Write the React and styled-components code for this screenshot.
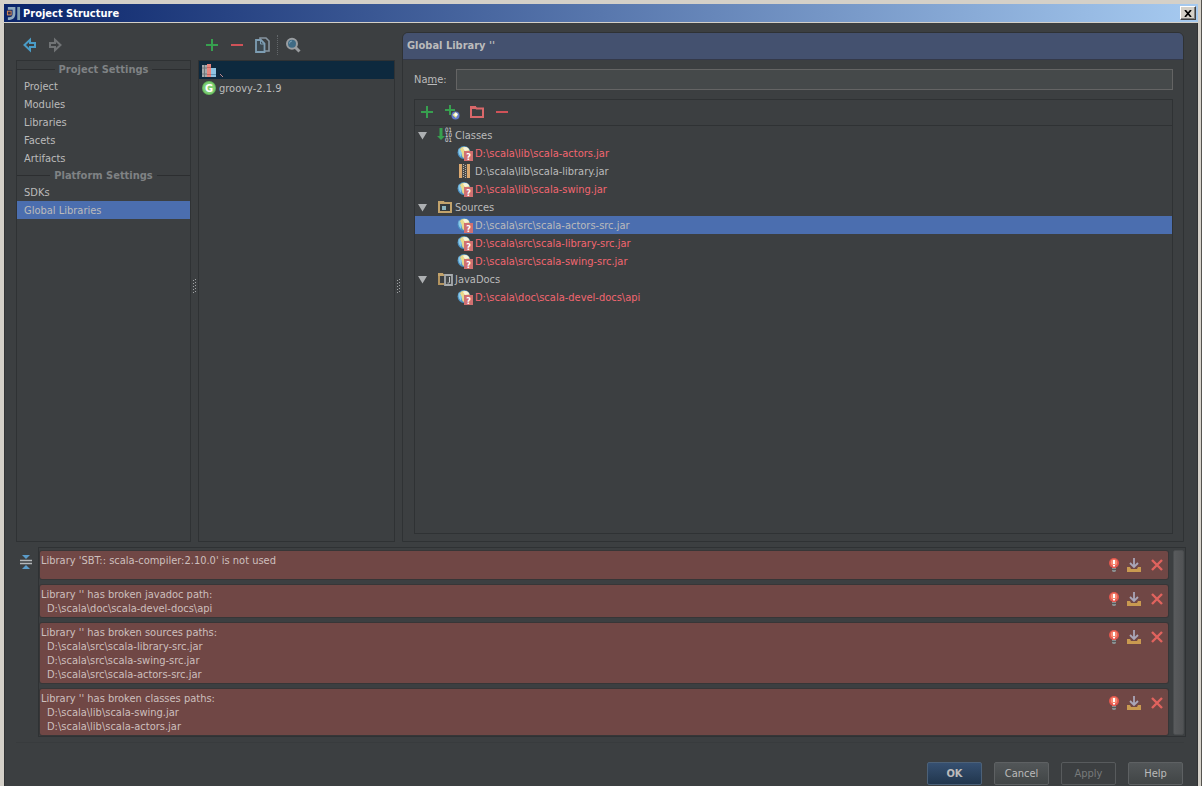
import React, { useState } from "react";
import styled, { createGlobalStyle, css } from "styled-components";

const GlobalStyle = createGlobalStyle`
    * {
        box-sizing: border-box;
    }

    body {
        margin: 0;
        border-right: 1px solid #55534f;
        background: #3c3f41;
    }

    body, button, input {
        font-family: "DejaVu Sans Condensed", "DejaVu Sans", sans-serif;
        font-size: 11px;
        color: #bbbbbb;
    }

    ul {
        list-style: none;
        margin: 0;
        padding: 0;
    }

    svg {
        display: block;
        flex: none;
    }
`;

/* ---------- window ---------- */

const Window = styled.div`
    min-height: 100vh;
    display: flex;
    flex-direction: column;
    border-style: solid;
    border-color: #d4d0c8;
    border-width: 4px 3px 0 4px;
    background: #3c3f41;
    box-shadow: inset 1px 0 #313335, inset -1px 0 #313335;
`;

const TitleBar = styled.header`
    display: flex;
    align-items: center;
    gap: 2px;
    height: 19px;
    padding: 0 2px;
    border-bottom: 1px solid #d4d0c8;
    background: linear-gradient(to right, #0a246a, #a6caf0);
`;

const WindowTitle = styled.h1`
    flex: 1;
    margin: 0;
    padding-top: 1px;
    font-size: 11px;
    line-height: 18px;
    color: #fff;
`;

const CloseButton = styled.button`
    display: flex;
    align-items: center;
    justify-content: center;
    width: 16px;
    height: 14px;
    padding: 0;
    border: 1px solid;
    border-color: #fff #404040 #404040 #fff;
    background: #d4d0c8;
    box-shadow: inset -1px -1px #808080;
`;

const Content = styled.div`
    flex: 1;
    display: flex;
    flex-direction: column;
    padding: 9px 14px 1px 12px;
`;

const Main = styled.main`
    flex: 1;
    display: grid;
    grid-template-columns: 175px 7px 197px 7px minmax(0, 1fr);
`;

const Column = styled.div`
    display: flex;
    flex-direction: column;
`;

/* ---------- toolbars ---------- */

const Toolbar = styled.div`
    display: flex;
    align-items: center;
    gap: 9px;
    height: ${(p) => p.$height || 28}px;
    padding: 0 6px 2px;

    ${(p) =>
        p.$framed &&
        css`
            padding: 0 4px 1px;
            border-bottom: 1px solid #2f3234;
        `}
`;

const IconButton = styled.button`
    display: flex;
    align-items: center;
    justify-content: center;
    width: 16px;
    height: 16px;
    padding: 0;
    border: 0;
    background: none;
    cursor: pointer;
`;

const Separator = styled.span`
    height: 20px;
    margin: 0 -2px;
    border-left: 1px dotted #63676a;
`;

/* ---------- left lists ---------- */

const Panel = styled.div`
    flex: 1;
    border: 1px solid #2f3234;
`;

const GroupTitle = styled.h2`
    display: flex;
    align-items: center;
    gap: 4px;
    height: 16px;
    margin: 0;
    padding-top: 1px;
    font-size: 11px;
    line-height: 16px;
    color: #7f8284;

    &::before,
    &::after {
        content: "";
        flex: 1;
        border-top: 1px solid #2c2e30;
    }
`;

const NavLink = styled.a`
    display: block;
    height: 18px;
    padding: 1px 7px 0;
    line-height: 18px;
    color: #bbbbbb;
    text-decoration: none;
    background: ${(p) => (p.$active ? "#4b6eaf" : "none")};
`;

const LibraryLink = styled.a`
    display: flex;
    align-items: center;
    gap: 2px;
    height: 18px;
    padding: 0 2px;
    color: #bbbbbb;
    text-decoration: none;
    background: ${(p) => (p.$active ? "#0d293e" : "none")};
`;

const Splitter = styled.div`
    display: flex;
    align-items: center;
    justify-content: center;
`;

/* ---------- library editor ---------- */

const Editor = styled.section`
    display: flex;
    flex-direction: column;
    border: 1px solid #2f3234;
    border-radius: 6px 6px 0 0;
`;

const EditorTitle = styled.h2`
    margin: 0;
    padding: 0 4px;
    font-size: 11px;
    line-height: 26px;
    border-bottom: 1px solid #34394a;
    border-radius: 5px 5px 0 0;
    background: #44516f;
`;

const EditorBody = styled.div`
    flex: 1;
    display: flex;
    flex-direction: column;
    gap: 9px;
    padding: 9px 10px 7px 11px;
`;

const NameRow = styled.div`
    display: flex;
    align-items: center;
    gap: 9px;

    label {
        line-height: 18px;
    }

    input {
        flex: 1;
        height: 21px;
        padding: 0 4px;
        border: 1px solid #646464;
        background: #45494a;
        outline: none;
    }
`;

const RootsPanel = styled.div`
    flex: 1;
    border: 1px solid #2f3234;
`;

const TreeRow = styled.button`
    display: flex;
    align-items: center;
    gap: 2px;
    width: 100%;
    height: 18px;
    padding: 0 0 0 ${(p) => (p.$leaf ? 42 : 2)}px;
    border: 0;
    text-align: left;
    white-space: nowrap;
    color: ${(p) => (p.$broken ? "#f26670" : "#bbbbbb")};
    background: none;

    ${(p) =>
        p.$selected &&
        css`
            color: #bbbbbb;
            background: #4b6eaf;
        `}
`;

const Arrow = styled.span`
    width: 18px;
`;

/* ---------- problems ---------- */

const Problems = styled.section`
    display: flex;
    align-items: flex-start;
    gap: 4px;
    margin: 5px -2px 0 0;
`;

const CollapseButton = styled(IconButton)`
    margin: 7px 0 0 2px;
`;

const ProblemsPane = styled.div`
    flex: 1;
    display: flex;
    gap: 5px;
    padding: 2px 1px 1px;
    border: 1px solid #2f3234;
`;

const ProblemList = styled.ul`
    flex: 1;
    display: grid;
    gap: 6px;
    padding-top: 1px;
`;

const Problem = styled.li`
    display: flex;
    justify-content: space-between;
    min-height: 28px;
    padding: 3px 4px 1px 1px;
    line-height: 14px;
    border-radius: 2px;
    color: #cdbfbd;
    background: #704745;
    box-shadow: 0 0 0 1px #373637;

    p {
        margin: 0;
    }

    li {
        padding-left: 6px;
    }
`;

const Actions = styled.div`
    display: flex;
    gap: 6px;
    height: 16px;
    margin-top: 3px;
`;

const ScrollThumb = styled.div`
    width: 11px;
    border: 1px solid #4a4d4f;
    border-radius: 2px;
    background: linear-gradient(to right, #595b5d, #515355);
`;

const Footer = styled.footer`
    display: flex;
    justify-content: flex-end;
    gap: 12px;
    margin-top: 5px;
    padding: 19px 1px 0 0;
    border-top: 1px solid #383b3d;
`;

const Button = styled.button`
    width: 55px;
    height: 23px;
    padding: 0;
    border: 1px solid #5e6163;
    border-radius: 2px;
    background: linear-gradient(#525658, #414546);

    ${(p) =>
        p.$primary &&
        css`
            font-weight: bold;
            border-color: #4c6178;
            background: linear-gradient(#365071, #21364d);
        `}

    &:disabled {
        color: #777a7b;
        border-color: #585b5d;
        background: none;
    }
`;

/* ---------- icons ---------- */

const Icon = ({ size = 16, children }) => (
    <svg width={size} height={size} viewBox="0 0 16 16" aria-hidden="true">
        {children}
    </svg>
);

const LogoIcon = () => (
    <Icon size={15}>
        <path d="M2 1h8v7c0 4-2 7-8 7v-3c4 0 5-1 5-4V4H2z" fill="#8fa9bd" />
        <path d="M1 5h5v5H1z" fill="#d98b53" />
        <path d="M2 6h3v3H2z" fill="#3a3350" />
        <path d="M12 1h3v14h-3z" fill="#7f9fae" />
    </Icon>
);

const CrossIcon = () => (
    <svg width="8" height="7" viewBox="0 0 8 7" aria-hidden="true">
        <path d="M1 0l6 7M7 0L1 7" stroke="#000" strokeWidth="1.700" />
    </svg>
);

const BackIcon = () => (
    <Icon>
        <path
            d="M2.500 8L8 2.800V6h5v4H8v3.200z"
            fill="none"
            stroke="#4a9cc7"
            strokeWidth="2"
        />
    </Icon>
);

const ForwardIcon = () => (
    <Icon>
        <path
            d="M13.500 8L8 2.800V6H3v4h5v3.200z"
            fill="none"
            stroke="#707375"
            strokeWidth="2"
        />
    </Icon>
);

const PlusIcon = () => (
    <Icon>
        <path d="M2 8h12M8 2v12" stroke="#37a04f" strokeWidth="2" />
    </Icon>
);

const MinusIcon = () => (
    <Icon>
        <path d="M2 8h12" stroke="#cf5258" strokeWidth="2" />
    </Icon>
);

const CopyIcon = () => (
    <Icon>
        <path
            d="M6 2V1h6l3 3v10h-4"
            fill="none"
            stroke="#8795a0"
            strokeWidth="1.600"
        />
        <path
            d="M2 3h5l3.500 3.500V15H2z"
            fill="#3c4850"
            stroke="#7d9db3"
            strokeWidth="1.800"
        />
        <path d="M6.500 3v4H10" fill="none" stroke="#7d9db3" />
    </Icon>
);

const SearchIcon = () => (
    <Icon>
        <path d="M10.500 10.500l4 4" stroke="#9a9da0" strokeWidth="3" />
        <circle
            cx="7"
            cy="6.800"
            r="5"
            fill="#3f6a84"
            stroke="#9a9da0"
            strokeWidth="2"
        />
        <path d="M4.500 6.500a2.500 2.500 0 012.500-2.500" fill="none" stroke="#7ba3b8" />
    </Icon>
);

const LibraryIcon = () => (
    <Icon>
        <path d="M1 3h5v12H1z" fill="#a5a9ac" />
        <path d="M3.500 3v12M1 6h5M1 12h5" stroke="#71767a" />
        <path d="M6 2h4v13H6z" fill="#e8877f" />
        <path d="M6 5.500h4M6 12.500h4" stroke="#c9655f" />
        <path d="M10 6h5v9h-5z" fill="#8fc4e3" />
        <path d="M10 12.500h5" stroke="#5e94b5" />
    </Icon>
);

const GroovyIcon = () => (
    <Icon>
        <circle cx="8" cy="8" r="7" fill="#63b85c" />
        <circle cx="8" cy="8" r="6" fill="#7fce74" />
        <text
            x="8"
            y="12"
            textAnchor="middle"
            fontSize="11"
            fontWeight="bold"
            fill="#fff"
        >
            G
        </text>
    </Icon>
);

// error underline of the unnamed library
const Squiggle = () => (
    <svg width="6" height="16" viewBox="0 0 6 16" aria-hidden="true">
        <path d="M1 12l3 3" stroke="#c08a90" />
    </svg>
);

const GripIcon = () => (
    <svg width="4" height="16" viewBox="0 0 4 16" aria-hidden="true">
        <path d="M0.500 1v15" stroke="#a0a3a5" strokeDasharray="1 2" />
        <path d="M2.500 0v15" stroke="#a0a3a5" strokeDasharray="1 2" />
    </svg>
);

const AttachUrlIcon = () => (
    <Icon>
        <path d="M1 6h10M6 1v10" stroke="#37a04f" strokeWidth="2" />
        <circle cx="11.500" cy="11.500" r="4" fill="#6279c9" />
        <path d="M8.500 11l3-3 2.500 2-2 4z" fill="#e9e68e" />
        <circle cx="12" cy="10.500" r="1.500" fill="#fff" />
    </Icon>
);

const ExcludeIcon = () => (
    <Icon>
        <path
            d="M2 13V3h4l1.500 1.500H14V13z"
            fill="none"
            stroke="#d9686a"
            strokeWidth="2"
        />
        <path d="M1 2h6v3H1z" fill="#d9686a" />
    </Icon>
);

const ArrowIcon = () => (
    <svg width="11" height="9" viewBox="0 0 11 9" aria-hidden="true">
        <path d="M1 1h9L5.500 8.500z" fill="#adb0b2" />
    </svg>
);

const ClassesIcon = () => (
    <Icon>
        <path d="M2.500 1h3v8H8l-4 4-4-4h2.500z" fill="#37a04f" />
        <g fontSize="6" fill="#e4e6e8">
            <text x="8" y="5">
                01
            </text>
            <text x="8" y="10">
                10
            </text>
            <text x="8" y="15">
                01
            </text>
        </g>
    </Icon>
);

const SourcesIcon = () => (
    <Icon>
        <path
            d="M2 13V4h12v9z"
            fill="#34393b"
            stroke="#c2a36c"
            strokeWidth="2"
        />
        <path d="M1 2h6l1 2H1z" fill="#c2a36c" />
        <path d="M5 7h4v4H5z" fill="#8bb3bd" />
    </Icon>
);

const DocsIcon = () => (
    <Icon>
        <path d="M7 13H2V4h5" fill="none" stroke="#b2935f" strokeWidth="2" />
        <path d="M1 2h5l1 3H1z" fill="#c2a36c" />
        <path
            d="M8 4h7v10H8z"
            fill="#45494b"
            stroke="#a7abae"
            strokeWidth="1.800"
        />
        <path d="M12.500 6v5c0 1-1 1.200-2 1" fill="none" stroke="#c3c6c8" />
    </Icon>
);

const BrokenIcon = () => (
    <Icon>
        <circle cx="7" cy="7.500" r="6.500" fill="#4b8fc2" />
        <path d="M3 4c2-3 6-3 9 0l1 4-6 5c-3-1-1-4-3-5z" fill="#e8d98a" />
        <path d="M6 3c2-2 5-1 6 2l-4 1z" fill="#f6f3df" />
        <path d="M2 3c-1 3-1 6 2 9l1-4z" fill="#8ccbe8" />
        <path d="M7 6h9v10H7z" fill="#d07070" />
        <text
            x="11.500"
            y="14.500"
            textAnchor="middle"
            fontSize="9"
            fontWeight="bold"
            fill="#fff"
        >
            ?
        </text>
    </Icon>
);

const JarIcon = () => (
    <Icon>
        <path d="M2 1h3v14H2zM10 1h3v14h-3z" fill="#dba86f" />
        <path d="M5 1h5v14H5z" fill="#4c4a47" />
        <path d="M6.500 1v14" stroke="#b5b3ae" strokeDasharray="1 1" />
        <path d="M8.500 2v13" stroke="#b5b3ae" strokeDasharray="1 1" />
    </Icon>
);

const CollapseIcon = () => (
    <Icon>
        <path d="M2 6.500h12M2 9.500h12" stroke="#b4b8ba" strokeWidth="1.400" />
        <path d="M4 1h8L8 5zM4 15h8l-4-4z" fill="#5b9cc9" />
    </Icon>
);

const BulbIcon = () => (
    <Icon>
        <circle cx="10" cy="6" r="5" fill="#e4574e" />
        <circle cx="10" cy="5.500" r="3.200" fill="#f58a72" />
        <path d="M8 9h4v2H8z" fill="#e4574e" />
        <path d="M9 3h2v4H9zM9 8h2v1.500H9z" fill="#fff" />
        <path d="M8 11h4v3l-1 1H9l-1-1z" fill="#8a8f90" />
        <path d="M8 12.500h4" stroke="#55595a" />
    </Icon>
);

const FixIcon = () => (
    <Icon>
        <path d="M1 10h3l1 2h6l1-2h3v5H1z" fill="#c99a50" />
        <path
            d="M8 1v9M4 6l4 4 4-4"
            fill="none"
            stroke="#a9a6b8"
            strokeWidth="1.800"
        />
    </Icon>
);

const RemoveIcon = () => (
    <Icon>
        <path d="M4 3l10 10M14 3L4 13" stroke="#e0635e" strokeWidth="2.400" />
    </Icon>
);

/* ---------- data ---------- */

const navGroups = [
    {
        title: "Project Settings",
        items: ["Project", "Modules", "Libraries", "Facets", "Artifacts"],
    },
    { title: "Platform Settings", items: ["SDKs", "Global Libraries"] },
];

const roots = [
    {
        title: "Classes",
        icon: ClassesIcon,
        paths: [
            { path: "D:\\scala\\lib\\scala-actors.jar", broken: true },
            { path: "D:\\scala\\lib\\scala-library.jar" },
            { path: "D:\\scala\\lib\\scala-swing.jar", broken: true },
        ],
    },
    {
        title: "Sources",
        icon: SourcesIcon,
        paths: [
            { path: "D:\\scala\\src\\scala-actors-src.jar", broken: true },
            { path: "D:\\scala\\src\\scala-library-src.jar", broken: true },
            { path: "D:\\scala\\src\\scala-swing-src.jar", broken: true },
        ],
    },
    {
        title: "JavaDocs",
        icon: DocsIcon,
        paths: [{ path: "D:\\scala\\doc\\scala-devel-docs\\api", broken: true }],
    },
];

const problems = [
    { text: "Library 'SBT:: scala-compiler:2.10.0' is not used", paths: [] },
    {
        text: "Library '' has broken javadoc path:",
        paths: ["D:\\scala\\doc\\scala-devel-docs\\api"],
    },
    {
        text: "Library '' has broken sources paths:",
        paths: [
            "D:\\scala\\src\\scala-library-src.jar",
            "D:\\scala\\src\\scala-swing-src.jar",
            "D:\\scala\\src\\scala-actors-src.jar",
        ],
    },
    {
        text: "Library '' has broken classes paths:",
        paths: [
            "D:\\scala\\lib\\scala-swing.jar",
            "D:\\scala\\lib\\scala-actors.jar",
        ],
    },
];

function Navigation() {
    return (
        <Column>
            <Toolbar>
                <IconButton aria-label="Back">
                    <BackIcon />
                </IconButton>
                <IconButton aria-label="Forward">
                    <ForwardIcon />
                </IconButton>
            </Toolbar>
            <Panel as="nav">
                {navGroups.map((group) => (
                    <div key={group.title}>
                        <GroupTitle>{group.title}</GroupTitle>
                        {group.items.map((item) => (
                            <NavLink
                                key={item}
                                href="#"
                                $active={item === "Global Libraries"}
                            >
                                {item}
                            </NavLink>
                        ))}
                    </div>
                ))}
            </Panel>
        </Column>
    );
}

function Libraries() {
    return (
        <Column>
            <Toolbar>
                <IconButton aria-label="Add library">
                    <PlusIcon />
                </IconButton>
                <IconButton aria-label="Delete library">
                    <MinusIcon />
                </IconButton>
                <IconButton aria-label="Copy library">
                    <CopyIcon />
                </IconButton>
                <Separator />
                <IconButton aria-label="Find usages">
                    <SearchIcon />
                </IconButton>
            </Toolbar>
            <Panel>
                <LibraryLink href="#" aria-label="Unnamed library" $active>
                    <LibraryIcon />
                    <Squiggle />
                </LibraryLink>
                <LibraryLink href="#">
                    <GroovyIcon />
                    groovy-2.1.9
                </LibraryLink>
            </Panel>
        </Column>
    );
}

function RootsTree() {
    const [selected, setSelected] = useState(
        "D:\\scala\\src\\scala-actors-src.jar"
    );

    return (
        <ul>
            {roots.map(({ title, icon: RootIcon, paths }) => (
                <li key={title}>
                    <TreeRow
                        $selected={selected === title}
                        onClick={() => setSelected(title)}
                    >
                        <Arrow>
                            <ArrowIcon />
                        </Arrow>
                        <RootIcon />
                        {title}
                    </TreeRow>
                    <ul>
                        {paths.map(({ path, broken }) => (
                            <li key={path}>
                                <TreeRow
                                    $leaf
                                    $broken={broken}
                                    $selected={selected === path}
                                    onClick={() => setSelected(path)}
                                >
                                    {broken ? <BrokenIcon /> : <JarIcon />}
                                    {path}
                                </TreeRow>
                            </li>
                        ))}
                    </ul>
                </li>
            ))}
        </ul>
    );
}

function LibraryEditor() {
    return (
        <Editor>
            <EditorTitle>Global Library ''</EditorTitle>
            <EditorBody>
                <NameRow>
                    <label htmlFor="name">
                        Na<u>m</u>e:
                    </label>
                    <input id="name" type="text" />
                </NameRow>
                <RootsPanel>
                    <Toolbar $height={26} $framed>
                        <IconButton aria-label="Add">
                            <PlusIcon />
                        </IconButton>
                        <IconButton aria-label="Specify documentation URL">
                            <AttachUrlIcon />
                        </IconButton>
                        <IconButton aria-label="Exclude">
                            <ExcludeIcon />
                        </IconButton>
                        <IconButton aria-label="Remove">
                            <MinusIcon />
                        </IconButton>
                    </Toolbar>
                    <RootsTree />
                </RootsPanel>
            </EditorBody>
        </Editor>
    );
}

function ProblemsView() {
    return (
        <Problems>
            <CollapseButton aria-label="Collapse">
                <CollapseIcon />
            </CollapseButton>
            <ProblemsPane>
                <ProblemList>
                    {problems.map(({ text, paths }) => (
                        <Problem key={text}>
                            <div>
                                <p>{text}</p>
                                <ul>
                                    {paths.map((path) => (
                                        <li key={path}>{path}</li>
                                    ))}
                                </ul>
                            </div>
                            <Actions>
                                <IconButton aria-label="Quick fix">
                                    <BulbIcon />
                                </IconButton>
                                <IconButton aria-label="Fix">
                                    <FixIcon />
                                </IconButton>
                                <IconButton aria-label="Ignore">
                                    <RemoveIcon />
                                </IconButton>
                            </Actions>
                        </Problem>
                    ))}
                </ProblemList>
                <ScrollThumb />
            </ProblemsPane>
        </Problems>
    );
}

function App() {
    return (
        <Window>
            <GlobalStyle />
            <TitleBar>
                <LogoIcon />
                <WindowTitle>Project Structure</WindowTitle>
                <CloseButton aria-label="Close">
                    <CrossIcon />
                </CloseButton>
            </TitleBar>
            <Content>
                <Main>
                    <Navigation />
                    <Splitter>
                        <GripIcon />
                    </Splitter>
                    <Libraries />
                    <Splitter>
                        <GripIcon />
                    </Splitter>
                    <LibraryEditor />
                </Main>
                <ProblemsView />
                <Footer>
                    <Button $primary>OK</Button>
                    <Button>Cancel</Button>
                    <Button disabled>Apply</Button>
                    <Button>Help</Button>
                </Footer>
            </Content>
        </Window>
    );
}

export default App;
